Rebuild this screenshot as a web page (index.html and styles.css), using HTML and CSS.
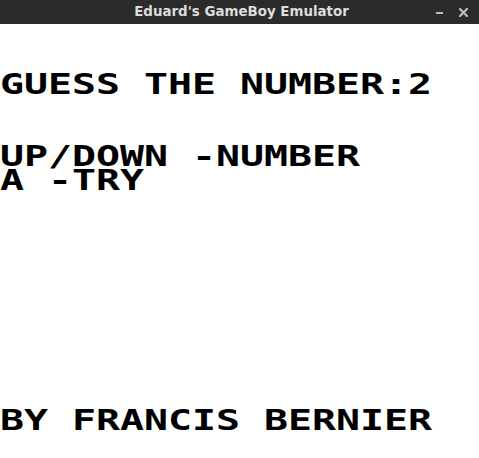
FILE: index.html
```html
<!DOCTYPE html>
<html>
<head>
<meta charset="utf-8">
<link rel="stylesheet" href="styles.css">
</head>
<body>
<div class="window">
  <div class="titlebar">
    <div class="title">Eduard's GameBoy Emulator</div>
    <div class="controls">
      <span class="btn-min"></span>
      <svg class="btn-close" width="9" height="9" viewBox="0 0 9 9"><path d="M1 1L8 8M8 1L1 8" stroke="#bdbdbd" stroke-width="2.2" stroke-linecap="square"/></svg>
    </div>
  </div>
  <div class="screen">
    <div class="row gap2"><span class="txt">GUESS THE NUMBER:2</span></div>
    <div class="row gap2"><span class="txt">UP/DOWN -NUMBER</span></div>
    <div class="row"><span class="txt">A -TRY</span></div>
    <div class="row gap9"><span class="txt">BY FRANCIS BERNIER</span></div>
  </div>
</div>
</body>
</html>
```
FILE: styles.css
```css
html, body {
  margin: 0;
  padding: 0;
  background: #ffffff;
}
.window {
  width: 479px;
  height: 458px;
  display: flex;
  flex-direction: column;
  overflow: hidden;
}
.titlebar {
  height: 24px;
  background: #2b2b2b;
  display: flex;
  align-items: center;
  justify-content: center;
  position: relative;
  flex: none;
}
.title {
  font-family: "DejaVu Sans", sans-serif;
  font-weight: bold;
  font-size: 13.4px;
  color: #dcdcdc;
  line-height: 24px;
  margin-left: 4px;
}
.controls {
  position: absolute;
  right: 11px;
  top: 0;
  height: 24px;
  display: flex;
  align-items: center;
  gap: 16px;
}
.btn-min {
  display: block;
  width: 7px;
  height: 2px;
  background: #bdbdbd;
  margin-top: 2px;
}
.btn-close {
  display: block;
}
.screen {
  height: 432px;
  border-bottom: 2px solid #444444;
  background: #ffffff;
  flex: none;
  padding-top: 48px;
  box-sizing: content-box;
}
.row {
  height: 24px;
  white-space: nowrap;
}
.row.gap2 { margin-bottom: 48px; }
.row.gap2 + .row.gap2 { margin-bottom: 0; }
.row.gap9 { margin-top: 216px; }
.txt {
  display: inline-block;
  font-family: "DejaVu Sans Mono", monospace;
  font-weight: bold;
  font-size: 29px;
  line-height: 24px;
  color: #000000;
  transform: scaleX(1.3746);
  transform-origin: 0 0;
}
```
